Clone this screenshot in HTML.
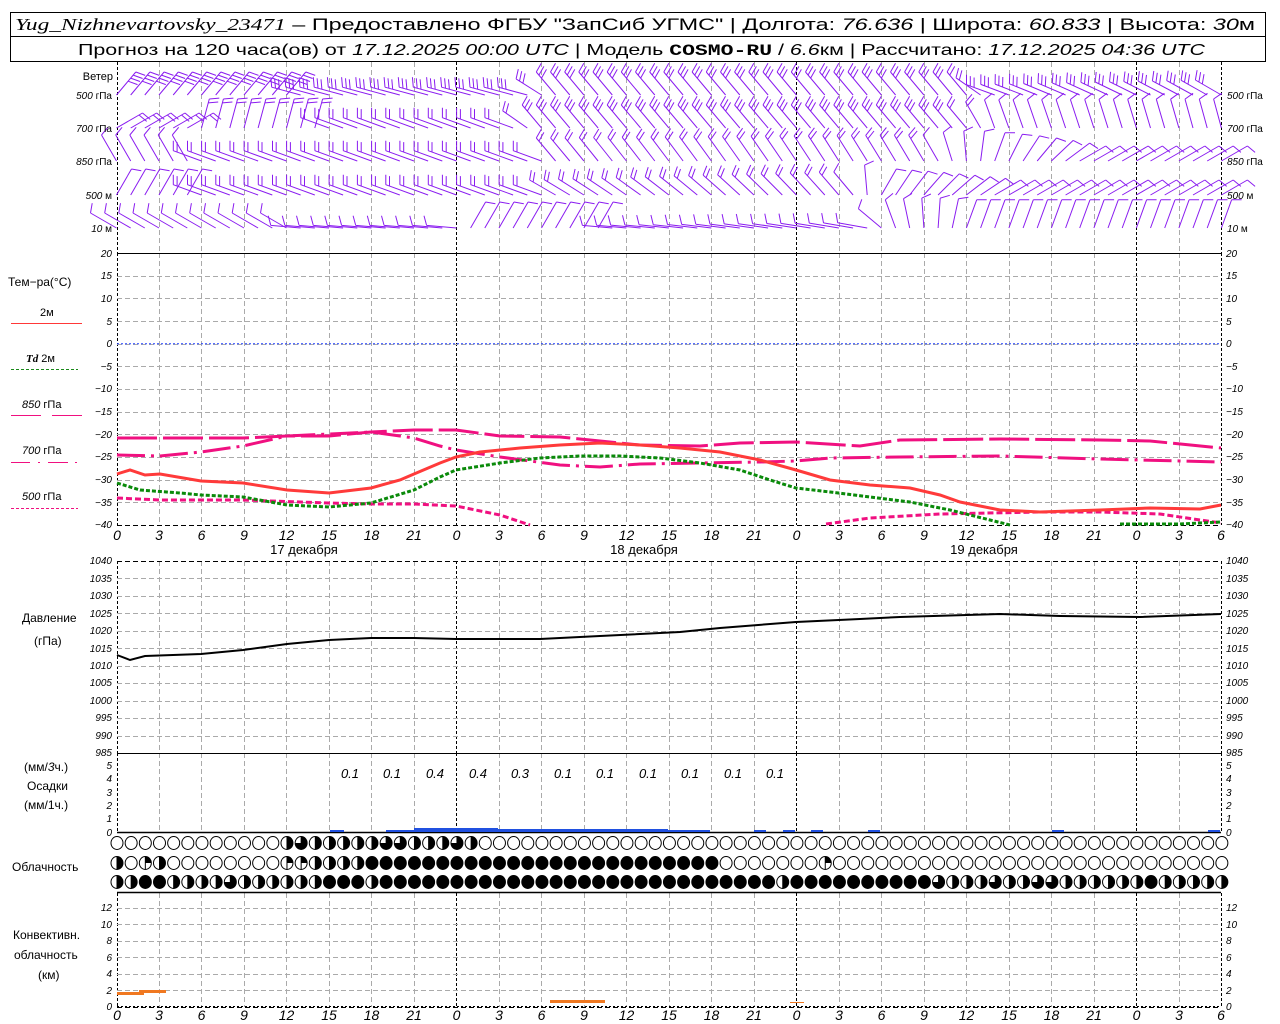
<!DOCTYPE html>
<html><head><meta charset="utf-8"><style>
html,body{margin:0;padding:0;background:#fff;width:1280px;height:1024px;overflow:hidden}
svg{display:block;font-family:"Liberation Sans",sans-serif}
.ax{font-size:10px;font-style:italic;fill:#000}
.lb{font-size:12px;fill:#000}
.tl{font-size:14px;font-style:italic;fill:#000}
</style></head><body>
<svg id="s" width="1280" height="1024" viewBox="0 0 1280 1024" xmlns="http://www.w3.org/2000/svg">
<rect width="1280" height="1024" fill="#fff"/>
<rect x="10.5" y="12.5" width="1255" height="49" fill="none" stroke="#000" stroke-width="1"/>
<line x1="10" y1="36.5" x2="1265" y2="36.5" stroke="#000"/>
<text x="15" y="30" font-size="17" textLength="1240" lengthAdjust="spacingAndGlyphs"><tspan font-family="Liberation Serif" font-style="italic">Yug_Nizhnevartovsky_23471</tspan> – Предоставлено ФГБУ "ЗапСиб УГМС" | Долгота: <tspan font-style="italic">76.636</tspan> | Широта: <tspan font-style="italic">60.833</tspan> | Высота: <tspan font-style="italic">30</tspan>м</text>
<text x="78" y="55" font-size="16" textLength="1127" lengthAdjust="spacingAndGlyphs">Прогноз на 120 часа(ов) от <tspan font-style="italic">17.12.2025 00:00 UTC</tspan> | Модель <tspan font-family="Liberation Mono" font-weight="bold">COSMO-RU</tspan> / <tspan font-style="italic">6.6</tspan>км | Рассчитано: <tspan font-style="italic">17.12.2025 04:36 UTC</tspan></text>
<g id="grid"></g>
<g id="wind" stroke="#8a1cf0" stroke-width="1" fill="none"></g>
<line x1="117" y1="253.5" x2="1221" y2="253.5" stroke="#000"/>
<line x1="117" y1="753.5" x2="1221" y2="753.5" stroke="#000"/>
<line x1="117" y1="832.5" x2="1221" y2="832.5" stroke="#000" stroke-width="1.5"/>
<line x1="117" y1="892.5" x2="1221" y2="892.5" stroke="#000" stroke-width="1.5"/>
<line x1="117" y1="343.8" x2="1221" y2="343.8" stroke="#2040ff" stroke-dasharray="2,2"/>
<g class="lb">
<text x="113" y="80" text-anchor="end" font-size="11">Ветер</text>
<text x="8" y="286">Тем−ра(°C)</text>
<text x="40" y="316" font-size="11">2м</text>
<text x="26" y="362" font-size="11"><tspan font-style="italic" font-weight="bold" font-family="Liberation Serif">Td</tspan>  2м</text>
<text x="22" y="408" font-size="11"><tspan font-style="italic">850</tspan> гПа</text>
<text x="22" y="454" font-size="11"><tspan font-style="italic">700</tspan> гПа</text>
<text x="22" y="500" font-size="11"><tspan font-style="italic">500</tspan> гПа</text>
<text x="22" y="622">Давление</text>
<text x="34" y="645">(гПа)</text>
<text x="24" y="771">(мм/<tspan font-style="italic">3</tspan>ч.)</text>
<text x="27" y="790">Осадки</text>
<text x="24" y="809">(мм/1ч.)</text>
<text x="12" y="871">Облачность</text>
<text x="13" y="939">Конвективн.</text>
<text x="14" y="959">облачность</text>
<text x="38" y="979">(км)</text>
</g>
<line x1="11" y1="323.5" x2="82" y2="323.5" stroke="#ff3838" stroke-width="1"/>
<line x1="11" y1="369.5" x2="78" y2="369.5" stroke="#1a8a1a" stroke-dasharray="3,2"/>
<line x1="11" y1="415.5" x2="41" y2="415.5" stroke="#f01080"/><line x1="52" y1="415.5" x2="82" y2="415.5" stroke="#f01080"/>
<path d="M11 462.5h19M38 462.5h2M48 462.5h20M75 462.5h2" stroke="#f01080"/>
<line x1="11" y1="508.5" x2="78" y2="508.5" stroke="#f01080" stroke-dasharray="3,2"/>
<g class="ax" id="labs">
<text x="112" y="99" text-anchor="end">500 <tspan font-style="normal">гПа</tspan></text>
<text x="112" y="132" text-anchor="end">700 <tspan font-style="normal">гПа</tspan></text>
<text x="112" y="165" text-anchor="end">850 <tspan font-style="normal">гПа</tspan></text>
<text x="112" y="199" text-anchor="end">500 <tspan font-style="normal">м</tspan></text>
<text x="112" y="232" text-anchor="end">10  <tspan font-style="normal">м</tspan></text>
<text x="1227" y="99">500 <tspan font-style="normal">гПа</tspan></text>
<text x="1227" y="132">700 <tspan font-style="normal">гПа</tspan></text>
<text x="1227" y="165">850 <tspan font-style="normal">гПа</tspan></text>
<text x="1227" y="199">500 <tspan font-style="normal">м</tspan></text>
<text x="1227" y="232">10  <tspan font-style="normal">м</tspan></text>
</g>
<g class="ax" text-anchor="end">
<text x="112" y="257">20</text><text x="112" y="279">15</text><text x="112" y="302">10</text><text x="112" y="325">5</text><text x="112" y="347">0</text><text x="112" y="370">−5</text><text x="112" y="392">−10</text><text x="112" y="415">−15</text><text x="112" y="438">−20</text><text x="112" y="460">−25</text><text x="112" y="483">−30</text><text x="112" y="506">−35</text><text x="112" y="528">−40</text>
<text x="112" y="564">1040</text><text x="112" y="582">1035</text><text x="112" y="599">1030</text><text x="112" y="617">1025</text><text x="112" y="634">1020</text><text x="112" y="652">1015</text><text x="112" y="669">1010</text><text x="112" y="686">1005</text><text x="112" y="704">1000</text><text x="112" y="721">995</text><text x="112" y="739">990</text><text x="112" y="756">985</text>
<text x="112" y="769">5</text><text x="112" y="782">4</text><text x="112" y="796">3</text><text x="112" y="809">2</text><text x="112" y="822">1</text><text x="112" y="836">0</text>
<text x="112" y="911">12</text><text x="112" y="928">10</text><text x="112" y="944">8</text><text x="112" y="961">6</text><text x="112" y="977">4</text><text x="112" y="994">2</text><text x="112" y="1010">0</text>
</g>
<g class="ax">
<text x="1226" y="257">20</text><text x="1226" y="279">15</text><text x="1226" y="302">10</text><text x="1226" y="325">5</text><text x="1226" y="347">0</text><text x="1226" y="370">−5</text><text x="1226" y="392">−10</text><text x="1226" y="415">−15</text><text x="1226" y="438">−20</text><text x="1226" y="460">−25</text><text x="1226" y="483">−30</text><text x="1226" y="506">−35</text><text x="1226" y="528">−40</text>
<text x="1226" y="564">1040</text><text x="1226" y="582">1035</text><text x="1226" y="599">1030</text><text x="1226" y="617">1025</text><text x="1226" y="634">1020</text><text x="1226" y="652">1015</text><text x="1226" y="669">1010</text><text x="1226" y="686">1005</text><text x="1226" y="704">1000</text><text x="1226" y="721">995</text><text x="1226" y="739">990</text><text x="1226" y="756">985</text>
<text x="1226" y="769">5</text><text x="1226" y="782">4</text><text x="1226" y="796">3</text><text x="1226" y="809">2</text><text x="1226" y="822">1</text><text x="1226" y="836">0</text>
<text x="1226" y="911">12</text><text x="1226" y="928">10</text><text x="1226" y="944">8</text><text x="1226" y="961">6</text><text x="1226" y="977">4</text><text x="1226" y="994">2</text><text x="1226" y="1010">0</text>
</g>
<g class="tl" text-anchor="middle">
<text x="117" y="540">0</text><text x="159" y="540">3</text><text x="201.5" y="540">6</text><text x="244" y="540">9</text><text x="286.5" y="540">12</text><text x="329" y="540">15</text><text x="371.5" y="540">18</text><text x="414" y="540">21</text><text x="456.5" y="540">0</text><text x="499" y="540">3</text><text x="541.5" y="540">6</text><text x="584" y="540">9</text><text x="626.5" y="540">12</text><text x="669" y="540">15</text><text x="711.5" y="540">18</text><text x="754" y="540">21</text><text x="796.5" y="540">0</text><text x="839" y="540">3</text><text x="881.5" y="540">6</text><text x="924" y="540">9</text><text x="966.5" y="540">12</text><text x="1009" y="540">15</text><text x="1051.5" y="540">18</text><text x="1094" y="540">21</text><text x="1136.5" y="540">0</text><text x="1179" y="540">3</text><text x="1221" y="540">6</text>
<text x="117" y="1020">0</text><text x="159" y="1020">3</text><text x="201.5" y="1020">6</text><text x="244" y="1020">9</text><text x="286.5" y="1020">12</text><text x="329" y="1020">15</text><text x="371.5" y="1020">18</text><text x="414" y="1020">21</text><text x="456.5" y="1020">0</text><text x="499" y="1020">3</text><text x="541.5" y="1020">6</text><text x="584" y="1020">9</text><text x="626.5" y="1020">12</text><text x="669" y="1020">15</text><text x="711.5" y="1020">18</text><text x="754" y="1020">21</text><text x="796.5" y="1020">0</text><text x="839" y="1020">3</text><text x="881.5" y="1020">6</text><text x="924" y="1020">9</text><text x="966.5" y="1020">12</text><text x="1009" y="1020">15</text><text x="1051.5" y="1020">18</text><text x="1094" y="1020">21</text><text x="1136.5" y="1020">0</text><text x="1179" y="1020">3</text><text x="1221" y="1020">6</text>
</g>
<g font-size="13" text-anchor="middle">
<text x="304" y="554">17 декабря</text><text x="644" y="554">18 декабря</text><text x="984" y="554">19 декабря</text>
</g>
<g style="font-size:13px;font-style:italic" text-anchor="middle">
<text x="350" y="778">0.1</text><text x="392" y="778">0.1</text><text x="435" y="778">0.4</text><text x="478" y="778">0.4</text><text x="520" y="778">0.3</text><text x="563" y="778">0.1</text><text x="605" y="778">0.1</text><text x="648" y="778">0.1</text><text x="690" y="778">0.1</text><text x="733" y="778">0.1</text><text x="775" y="778">0.1</text>
</g>
<g fill="none">
<polyline stroke="#f01080" stroke-width="3" stroke-dasharray="40,6" points="117,438 160,438 243,438 287,436 329,436 371,432 414,430 456,430 500,436 560,437 600,441 640,445 700,446 740,443 796,442 860,446 900,440 1000,439 1100,440 1150,441 1221,448"/>
<polyline stroke="#f01080" stroke-width="3" stroke-dasharray="28,6,3,6" points="117,455 160,456 201,452 243,446 287,436 329,434 371,432 414,438 440,446 456,450 500,457 560,465 600,467 640,464 700,463 760,462 796,461 830,458 900,457 1000,456 1100,459 1221,462"/>
<polyline stroke="#f01080" stroke-width="3" stroke-dasharray="6,3" points="117,498 160,500 243,500 329,503 371,504 414,504 456,506 500,515 530,525"/>
<polyline stroke="#f01080" stroke-width="3" stroke-dasharray="6,3" points="826,524 870,518 940,514 1040,512 1100,512 1160,514 1200,520 1221,523"/>
<polyline stroke="#0a8a0a" stroke-width="3" stroke-dasharray="4,2" points="117,483 140,490 180,493 201,495 243,497 287,505 329,507 371,503 414,490 440,477 456,470 500,463 540,458 580,456 620,456 660,458 700,463 740,470 770,480 796,488 830,492 870,497 910,502 950,510 990,520 1010,525"/>
<polyline stroke="#0a8a0a" stroke-width="3" stroke-dasharray="4,2" points="1120,524 1180,524 1221,522"/>
<polyline stroke="#ff3a3a" stroke-width="3" points="117,474 130,470 145,475 160,474 201,481 243,483 287,490 329,493 371,488 400,480 414,474 440,463 456,457 480,452 520,448 560,445 600,443 640,445 680,448 720,452 760,460 796,470 830,480 870,485 910,488 940,495 960,502 1000,510 1040,512 1100,510 1150,508 1200,509 1221,505"/>
<polyline stroke="#000" stroke-width="2" points="117,655 130,660 145,656 201,654 243,650 287,644 329,640 371,638 414,638 456,639 540,639 600,636 680,632 720,628 796,622 860,619 900,617 1000,614 1060,616 1140,617 1221,614"/>
</g>
<g fill="#2050e0">
<rect x="330" y="830" width="14" height="2"/><rect x="386" y="830" width="28" height="2"/><rect x="414" y="828" width="42" height="4"/><rect x="456" y="828" width="42" height="4"/><rect x="498" y="829" width="42" height="3"/><rect x="540" y="829" width="128" height="3"/><rect x="668" y="830" width="42" height="2"/><rect x="754" y="830" width="12" height="2"/><rect x="783" y="830" width="12" height="2"/><rect x="811" y="830" width="12" height="2"/><rect x="868" y="830" width="12" height="2"/><rect x="1052" y="830" width="12" height="2"/><rect x="1208" y="830" width="12" height="2"/>
</g>
<g fill="#f07820">
<rect x="117" y="992" width="27" height="3"/><rect x="139" y="990" width="27" height="3"/><rect x="550" y="1000" width="55" height="3"/><rect x="790" y="1002" width="14" height="1"/>
</g>
<g id="clouds"></g>
</svg>
<script>
(function(){
var NS="http://www.w3.org/2000/svg";
function X(h){return 116.5+h*14.165;}
function el(p,t,a){var e=document.createElementNS(NS,t);for(var k in a)e.setAttribute(k,a[k]);p.appendChild(e);return e;}
var g=document.getElementById('grid');
for(var i=0;i<=26;i++){var x=Math.round(X(i*3))+0.5;var day=(i%8==0)||i==26;
 var col=day?'#000':'#aaa';
 [[62,253],[253,525],[561,753],[753,832],[893,1007]].forEach(function(r){
  el(g,'line',{x1:x,y1:r[0],x2:x,y2:r[1],stroke:col,'stroke-dasharray':day?'3,2':'5,3'});});}
function hg(y0,y1,n){for(var j=0;j<=n;j++){var y=Math.round(y0+(y1-y0)*j/n)+0.5;
 el(g,'line',{x1:117,y1:y,x2:1221,y2:y,stroke:(j==n&&y1>520&&y1<530)||(j==0&&y0<570&&y0>555)||(j==n&&y1>1000)?'#000':'#aaa','stroke-dasharray':'5,3'});}}
hg(253,525,12);hg(561,753,11);hg(907.7,1006.7,6);
el(g,'line',{x1:117,y1:1006.5,x2:1221,y2:1006.5,stroke:'#000','stroke-dasharray':'2,2'});
var w=document.getElementById('wind');
var rows=[[95,[[0,40,4],[12,40,4],[13,285,3],[29,285,3],[31,320,3],[60,320,2],[62,290,3],[78,300,2]]],
[128,[[0,60,2],[5,60,2],[6,15,2],[14,15,2],[15,290,2],[28,290,2],[30,320,3],[60,320,2],[62,340,1],[78,345,1]]],
[161,[[0,330,1],[5,330,1],[6,290,2],[30,290,2],[31,320,2],[58,330,1],[62,20,1],[68,60,1],[78,60,1]]],
[195,[[0,30,1],[5,30,1],[6,290,2],[30,290,2],[31,300,2],[52,320,1],[54,30,1],[62,60,1],[78,60,1]]],
[228,[[0,300,1],[12,300,1],[13,275,1],[24,275,1],[25,30,1],[34,30,1],[35,275,1],[53,280,1],[55,340,1],[60,20,1],[78,20,1]]]];
rows.forEach(function(r){var y=r[0],k=r[1];
 for(var h=0;h<=78;h++){var a=k[0][1],n=k[0][2];
  for(var j=0;j<k.length-1;j++){if(h>=k[j][0]&&h<=k[j+1][0]){var t=(h-k[j][0])/Math.max(1,k[j+1][0]-k[j][0]);var d=k[j+1][1]-k[j][1];if(d>180)d-=360;if(d<-180)d+=360;a=k[j][1]+d*t;n=k[j][2];}}
  var rad=a*Math.PI/180,L=30,bx=X(h),ex=bx+L*Math.sin(rad),ey=y-L*Math.cos(rad);
  var d='M'+bx.toFixed(1)+' '+y+'L'+ex.toFixed(1)+' '+ey.toFixed(1);
  for(var b=0;b<n;b++){var px=bx+(L-b*4)*Math.sin(rad),py=y-(L-b*4)*Math.cos(rad);var br=(a+70)*Math.PI/180;
   d+='M'+px.toFixed(1)+' '+py.toFixed(1)+'l'+(10*Math.sin(br)).toFixed(1)+' '+(-10*Math.cos(br)).toFixed(1);}
  el(w,'path',{d:d});}});
var c=document.getElementById('clouds');
function rep(s,n){var o='';for(var i=0;i<n;i++)o+=s;return o;}
var R=[rep('e',12)+'hthhhhhtthhhth'+rep('e',53),
'heqh'+rep('e',8)+'qqhhhh'+rep('f',25)+rep('e',7)+'q'+rep('e',28),
'hhff'+'hhhhthhhhhh'+'fff'+'h'+rep('f',28)+'h'+rep('f',10)+'t'+'hhhthhtthhhhh'+'hfhhhhh'];
var Y=[843,863,882];
R.forEach(function(s,ri){var cy=Y[ri];for(var i=0;i<79;i++){var cx=117+i*14.165,ch=s[i],rx=6,ry=6.5;
 if(ch=='f'){el(c,'ellipse',{cx:cx,cy:cy,rx:rx,ry:ry,fill:'#000',stroke:'#000'});continue;}
 el(c,'ellipse',{cx:cx,cy:cy,rx:rx,ry:ry,fill:'#fff',stroke:'#000'});
 if(ch=='h')el(c,'path',{d:'M'+cx+' '+(cy-ry)+'A'+rx+' '+ry+' 0 0 1 '+cx+' '+(cy+ry)+'Z',fill:'#000'});
 if(ch=='q')el(c,'path',{d:'M'+cx+' '+cy+'L'+cx+' '+(cy-ry)+'A'+rx+' '+ry+' 0 0 1 '+(cx+rx)+' '+cy+'Z',fill:'#000'});
 if(ch=='t')el(c,'path',{d:'M'+cx+' '+cy+'L'+cx+' '+(cy-ry)+'A'+rx+' '+ry+' 0 1 1 '+(cx-rx)+' '+cy+'Z',fill:'#000'});
 if(ch!='e')el(c,'line',{x1:cx,y1:cy-ry,x2:cx,y2:cy+ry,stroke:'#000'});}});
})();
</script>
</body></html>
